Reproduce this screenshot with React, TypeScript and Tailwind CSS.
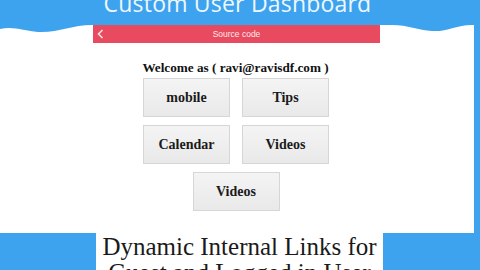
import React from "react";

function Btn({ label, className = "" }: { label: string; className?: string }) {
  return (
    <div
      className={`w-[87px] h-[39px] flex items-center justify-center border border-[#d6d6d6] bg-gradient-to-b from-[#f4f4f4] to-[#e9e9e9] text-[14px] font-bold text-[#1a1a1a] ${className}`}
      style={{ fontFamily: '"Liberation Serif", serif' }}
    >
      {label}
    </div>
  );
}

export default function App() {
  return (
    <div className="w-[480px] h-[270px] overflow-hidden bg-[#3ea3ee] flex flex-col">
      {/* header band */}
      <div className="h-[22px] shrink-0 flex justify-center">
        <div
          className="text-[23px] leading-[24px] mt-[-9px] ml-[-5px] text-[#eef7ff] tracking-[0.2px]"
          style={{ fontFamily: '"Open Sans", sans-serif' }}
        >
          Custom User Dashboard
        </div>
      </div>

      {/* middle */}
      <div className="h-[211px] shrink-0 flex">
        <div className="relative w-[474px] bg-white flex flex-col items-center">
          <svg className="absolute left-0 top-0" width="474" height="12" viewBox="0 0 474 12">
            <path
              d="M0 0 H474 V3 C458 2 448 10 432 9 C418 8 408 3 392 3 L92 3 C72 3 58 11 38 10 C24 9 14 4 0 7 Z"
              fill="#3ea3ee"
            />
          </svg>
          <div className="relative mt-[3px] ml-[-1px] w-[287px] h-[18px] bg-[#e84a5f] flex items-center">
            <svg className="absolute left-[4px] top-[4px]" width="7" height="10" viewBox="0 0 7 10">
              <path d="M5.5 1 L1.5 5 L5.5 9" stroke="#fbe3e6" strokeWidth="1.6" fill="none" />
            </svg>
            <div
              className="w-full text-center text-[8.5px] text-[#fde8eb]"
              style={{ fontFamily: '"Liberation Sans", sans-serif' }}
            >
              Source code
            </div>
          </div>
          <div
            className="mt-[17px] ml-[-3px] text-[13.2px] leading-[15px] font-bold text-[#111]"
            style={{ fontFamily: '"Liberation Serif", serif' }}
          >
            Welcome as ( ravi@ravisdf.com )
          </div>
          <div className="mt-[3px] ml-[-2px] flex flex-col items-center gap-[8px]">
            <div className="flex gap-[12px]">
              <Btn label="mobile" />
              <Btn label="Tips" />
            </div>
            <div className="flex gap-[12px]">
              <Btn label="Calendar" />
              <Btn label="Videos" />
            </div>
            <Btn label="Videos" />
          </div>
        </div>
        <div className="flex-1" />
      </div>

      {/* bottom */}
      <div className="flex-1 flex justify-center">
        <div
          className="ml-[-1px] w-[287px] bg-white text-center text-[25px] leading-[26px] text-[#1a1a1a] pt-[1px] whitespace-nowrap"
          style={{ fontFamily: '"Liberation Serif", serif' }}
        >
          Dynamic Internal Links for
          <br />
          Guest and Logged in User
        </div>
      </div>
    </div>
  );
}
